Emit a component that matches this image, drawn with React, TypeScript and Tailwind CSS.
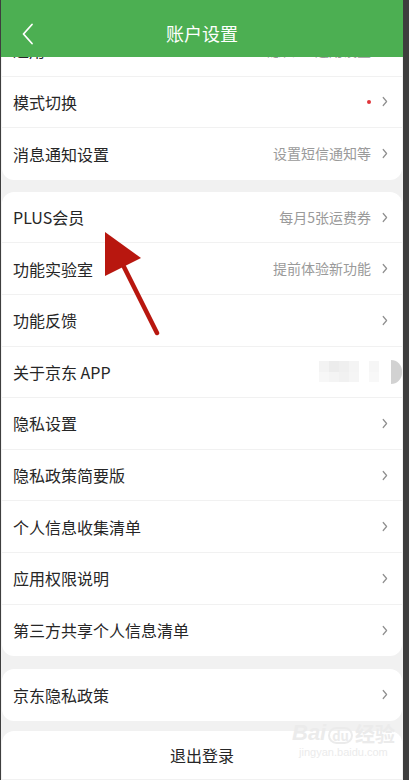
import React from "react";

const Chevron = () => (
  <svg width="6" height="11" viewBox="0 0 6 11" className="ml-[11px] shrink-0">
    <path d="M1.2 1.5 L4.6 5.5 L1.2 9.5" fill="none" stroke="#8f8f8f" strokeWidth="1.2" strokeLinecap="round" strokeLinejoin="round" />
  </svg>
);

type RowProps = { label: string; right?: React.ReactNode; last?: boolean };

const Row = ({ label, right, last }: RowProps) => (
  <div className={`flex h-[51.6px] items-center pl-[11px] pr-[14px] ${last ? "" : "border-b border-[#f1f1f1]"}`}>
    <span className="flex-1 text-[16px] text-[#262626]">{label}</span>
    {right}
    <Chevron />
  </div>
);

const Gray = ({ t }: { t: string }) => <span className="text-[14px] text-[#9a9a9a]">{t}</span>;

export default function App() {
  return (
    <div
      className="relative flex h-[780px] w-[409px] overflow-hidden bg-[#3e3e3e]"
      style={{ fontFamily: '"Noto Sans CJK SC", "Noto Sans", sans-serif' }}
    >
      <div className="ml-[1px] flex w-[402px] flex-col overflow-hidden bg-[#f1f1f1]">
        <div className="relative z-10 flex h-[57px] shrink-0 items-center justify-center bg-[#4caf52]">
          <svg width="14" height="22" viewBox="0 0 14 22" className="absolute left-[20px] top-[23px]">
            <path d="M11 1.5 L2.5 11 L11 20.5" fill="none" stroke="#ffffff" strokeWidth="1.8" strokeLinecap="round" strokeLinejoin="round" />
          </svg>
          <span className="pt-[9px] text-[18px] text-white">账户设置</span>
        </div>
        <div className="flex flex-1 flex-col overflow-hidden px-[1px]">
          <div className="-mt-[32px] rounded-b-[12px] bg-white">
            <Row label="通用" right={<Gray t="隐私 · 通用设置" />} />
            <Row label="模式切换" right={<span className="h-[4px] w-[4px] rounded-full bg-[#e0343a]" />} />
            <Row label="消息通知设置" right={<Gray t="设置短信通知等" />} last />
          </div>
          <div className="mt-[12px] rounded-[12px] bg-white">
            <Row label="PLUS会员" right={<Gray t="每月5张运费券" />} />
            <Row label="功能实验室" right={<Gray t="提前体验新功能" />} />
            <Row label="功能反馈" />
            <div className="flex h-[51.6px] items-center border-b border-[#f1f1f1] pl-[11px]">
              <span className="flex-1 text-[16px] text-[#262626]">关于京东 APP</span>
              <div className="grid h-[21px] w-[60px] grid-cols-6">
                <div className="bg-[#f3f3f3]" /><div className="bg-[#ececec]" /><div className="bg-[#efefef]" />
                <div className="bg-[#f4f4f4]" /><div className="bg-white" /><div className="bg-[#f6f6f6]" />
                <div className="bg-[#f7f7f7]" /><div className="bg-[#f4f4f4]" /><div className="bg-[#f1f1f1]" />
                <div className="bg-[#f5f5f5]" /><div className="bg-white" /><div className="bg-[#f8f8f8]" />
              </div>
              <div className="ml-[12px] h-[24px] w-[11px] rounded-r-full bg-[#d2d2d2]" />
            </div>
            <Row label="隐私设置" />
            <Row label="隐私政策简要版" />
            <Row label="个人信息收集清单" />
            <Row label="应用权限说明" />
            <Row label="第三方共享个人信息清单" last />
          </div>
          <div className="mt-[13px] rounded-[12px] bg-white">
            <Row label="京东隐私政策" last />
          </div>
          <div className="mt-[10px] flex h-[48px] shrink-0 items-center justify-center rounded-t-[12px] bg-white">
            <span className="text-[16px] text-[#262626]">退出登录</span>
          </div>
        </div>
      </div>

      <svg width="409" height="780" className="pointer-events-none absolute left-0 top-0">
        <line x1="157" y1="333" x2="118" y2="255" stroke="#b8170f" strokeWidth="4.5" strokeLinecap="round" />
        <polygon points="105,232 105,276 141,258" fill="#b8170f" />
      </svg>

      <div className="pointer-events-none absolute left-[292px] top-[722px] flex flex-col items-center text-[#ebebeb]">
        <div className="flex items-end gap-[2px] leading-none">
          <span className="text-[22px] font-bold italic" style={{ fontFamily: '"Liberation Sans", sans-serif' }}>Bai</span>
          <span className="rounded-full border-2 border-[#ebebeb] px-[2px] text-[13px] font-bold">du</span>
          <span className="text-[20px] font-bold">经验</span>
        </div>
        <span className="mt-[3px] text-[11px] leading-none" style={{ fontFamily: '"Liberation Sans", sans-serif' }}>jingyan.baidu.com</span>
      </div>
    </div>
  );
}
